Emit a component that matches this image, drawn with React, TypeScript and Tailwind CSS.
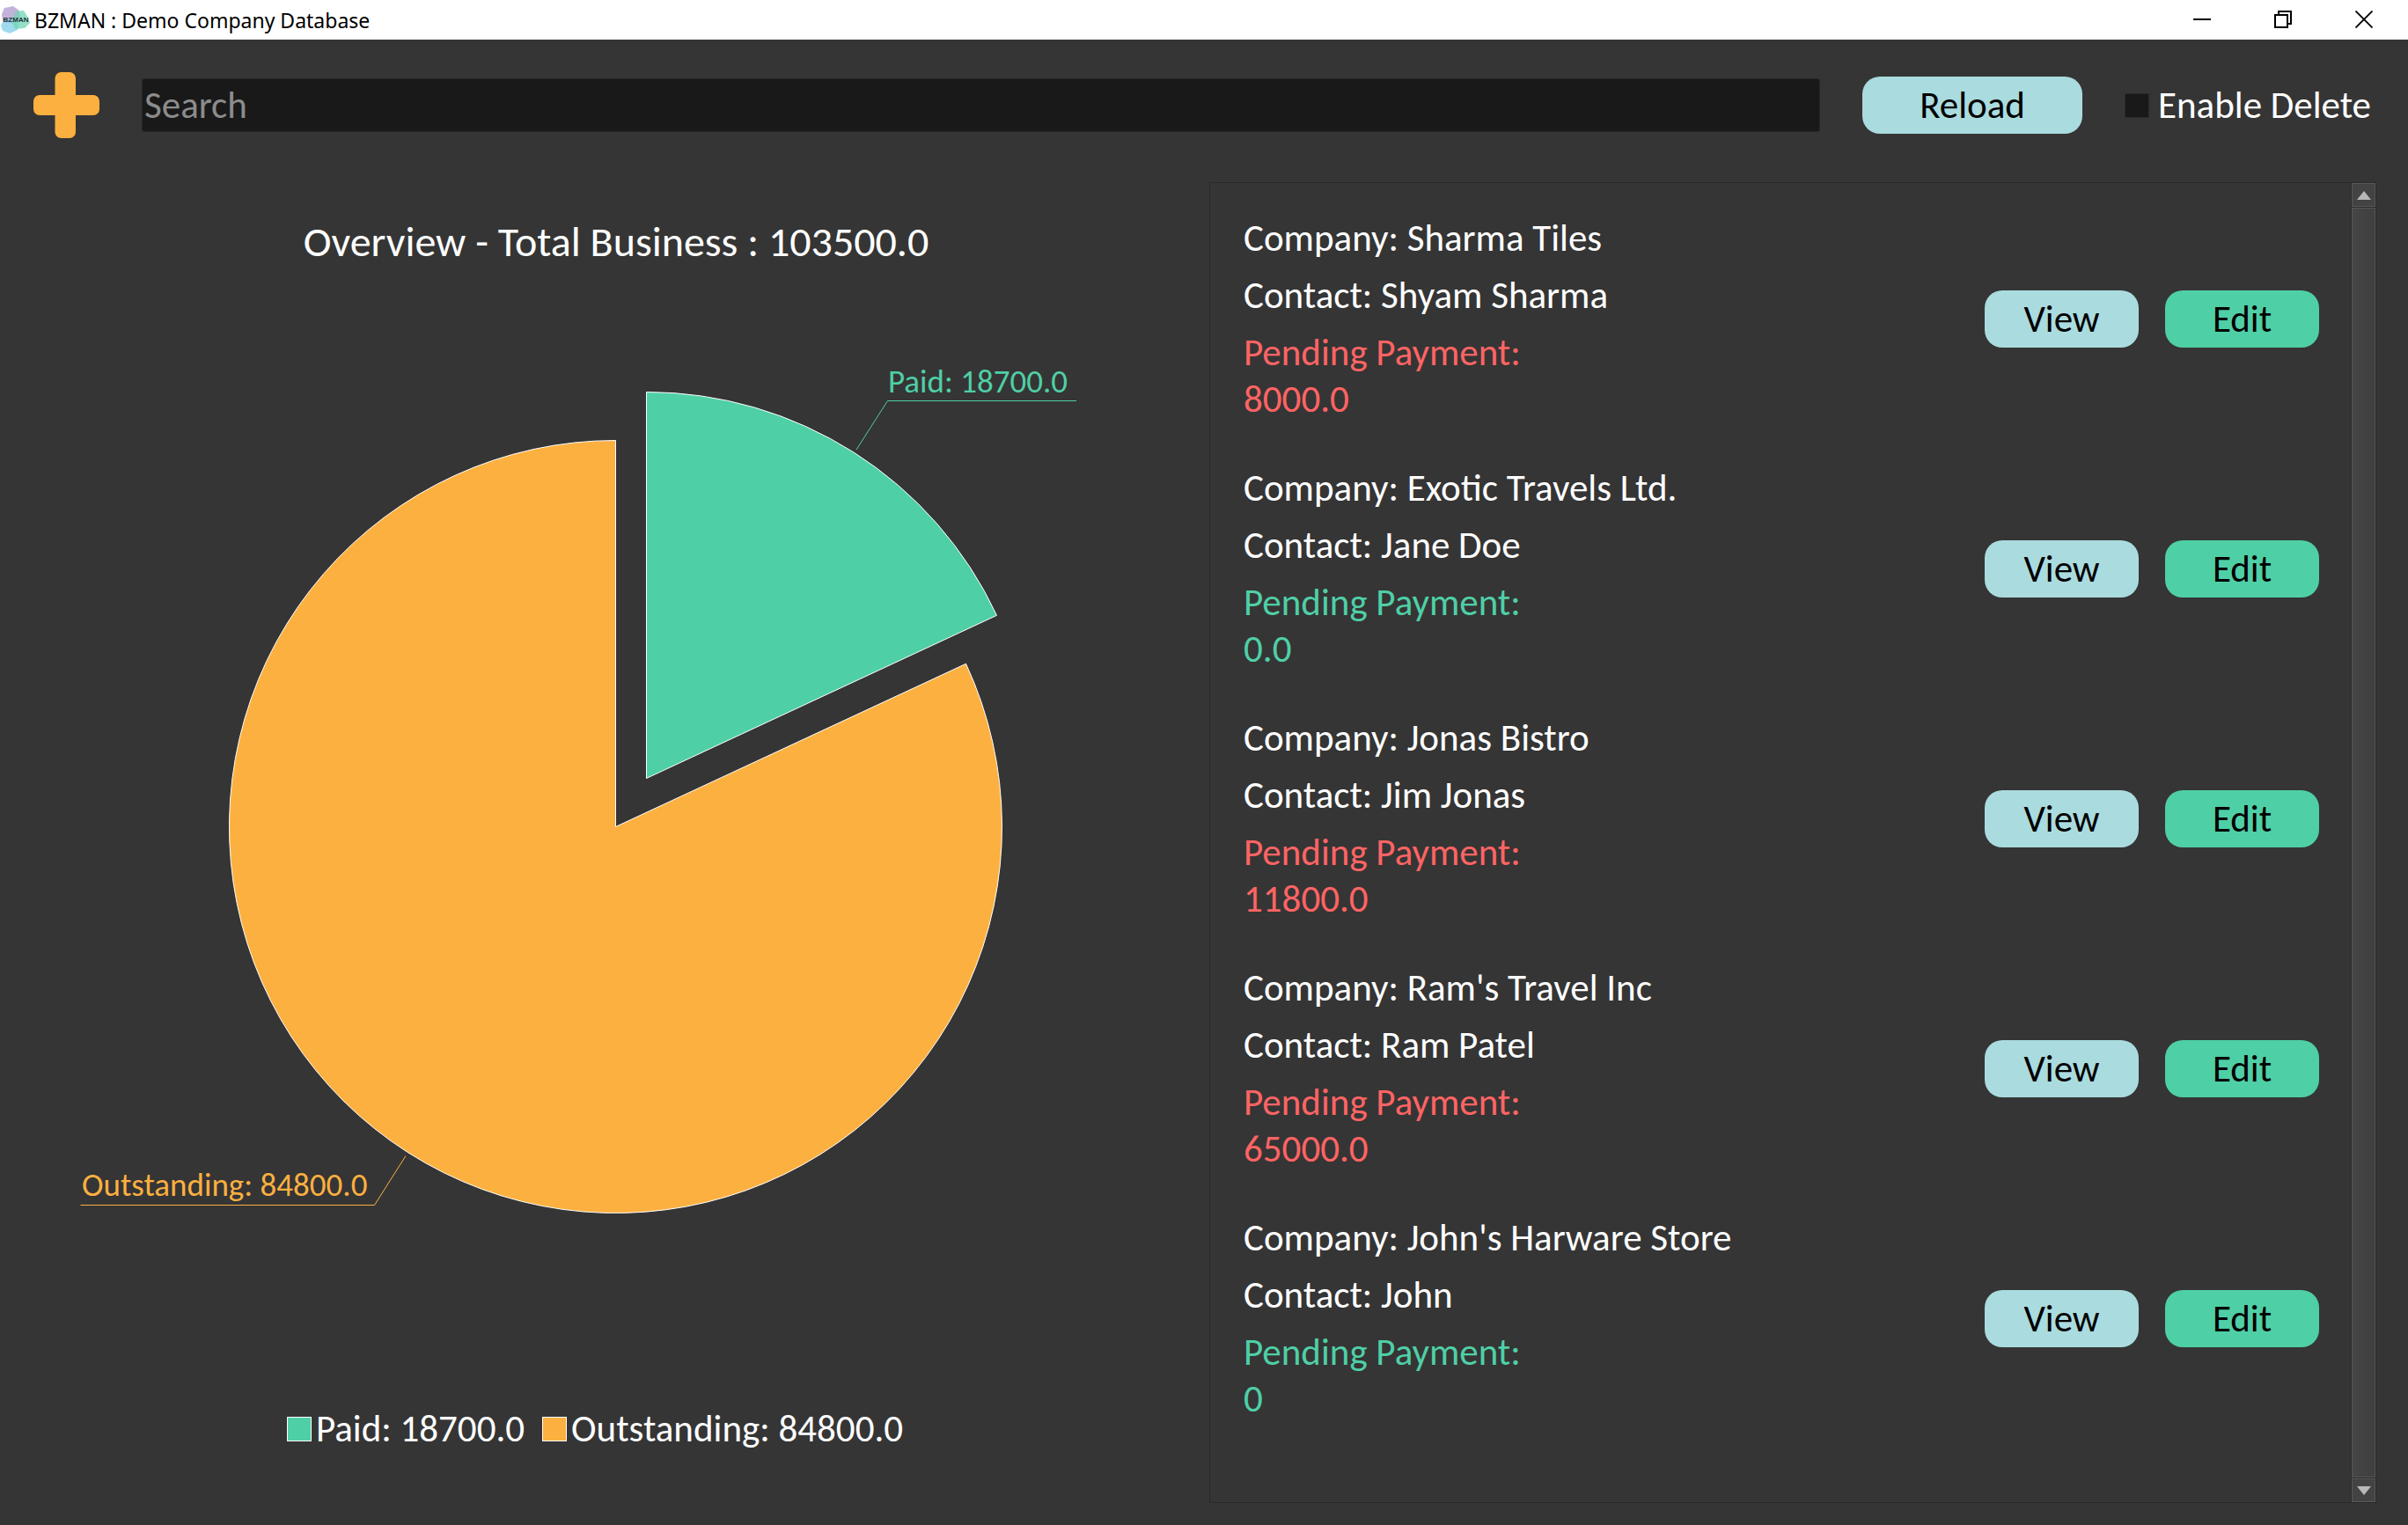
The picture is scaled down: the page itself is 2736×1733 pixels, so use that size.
import type { ReactNode } from "react";

type Company = { name: string; contact: string; pending: string; settled: boolean };

const companies: Company[] = [
  { name: "Sharma Tiles", contact: "Shyam Sharma", pending: "8000.0", settled: false },
  { name: "Exotic Travels Ltd.", contact: "Jane Doe", pending: "0.0", settled: true },
  { name: "Jonas Bistro", contact: "Jim Jonas", pending: "11800.0", settled: false },
  { name: "Ram's Travel Inc", contact: "Ram Patel", pending: "65000.0", settled: false },
  { name: "John's Harware Store", contact: "John", pending: "0", settled: true },
];

function Logo() {
  return (
    <svg viewBox="0 0 34 34" className="size-[34px]" aria-hidden="true">
      <path d="M5 3 L15 1 L22 6 L23 16 L14 21 L3 18 L2 10 Z" fill="#b9a6d3" fillOpacity="0.85" />
      <path d="M4 17 L12 15 L21 20 L20 28 L11 32 L3 29 L1 23 Z" fill="#8fd3ec" fillOpacity="0.85" />
      <path d="M18 7 L27 6 L32 14 L34 20 L28 26 L17 27 L13 18 Z" fill="#6fd6b3" fillOpacity="0.75" />
      <text x="18" y="19" textAnchor="middle" fontSize="8" fontWeight="700" fill="#26323a" className="font-['Liberation_Sans',sans-serif]">
        BZMAN
      </text>
    </svg>
  );
}

function WindowButton({ label, children }: { label: string; children: ReactNode }) {
  return (
    <button type="button" aria-label={label} className="flex h-[43px] w-[92px] items-center justify-center">
      <svg viewBox="0 0 20 20" className="size-5" fill="none" stroke="#000" strokeWidth="2">
        {children}
      </svg>
    </button>
  );
}

function TitleBar() {
  return (
    <div className="flex h-[45px] items-start bg-white pr-1 text-black">
      <div className="flex h-[46px] flex-1 items-center gap-[5px] font-['Noto_Sans',sans-serif] text-[23px]">
        <Logo />
        <span>BZMAN : Demo Company Database</span>
      </div>
      <WindowButton label="Minimize">
        <path d="M0 10 H20" />
      </WindowButton>
      <WindowButton label="Restore">
        <path d="M1 5 H15 V19 H1 Z M5 5 V1 H19 V15 H15" />
      </WindowButton>
      <WindowButton label="Close">
        <path d="M0.500 0.500 L19.500 19.500 M19.500 0.500 L0.500 19.500" strokeWidth="1.800" />
      </WindowButton>
    </div>
  );
}

function Toolbar() {
  return (
    <header className="flex h-[149px] items-center gap-12 pr-[42px] pl-[38px]">
      <button type="button" aria-label="Add company" className="shrink-0">
        <svg viewBox="0 0 75 75" className="size-[75px]" fill="#fcb040">
          <rect x="24.500" y="0" width="23.500" height="75" rx="7" />
          <rect x="0" y="26" width="75" height="23" rx="7" />
        </svg>
      </button>
      <input
        type="text"
        aria-label="Search"
        placeholder="Search"
        className="h-[61px] min-w-0 flex-1 rounded-[3px] border border-[#272727] bg-[#191919] px-0.5 text-white placeholder:text-[#8c8c8c]"
      />
      <button type="button" className="h-[65px] w-[250px] rounded-[20px] bg-[#aadbdf] text-black">
        Reload
      </button>
      <label className="flex items-center gap-[10px] whitespace-nowrap">
        <input type="checkbox" className="size-7 appearance-none border border-[#2a2a2a] bg-[#191919] checked:bg-[#4fcfa6]" />
        Enable Delete
      </label>
    </header>
  );
}

function PieChart() {
  return (
    <svg viewBox="26 304 1348 1293" className="w-full" role="img" aria-label="Paid 18700.0, outstanding 84800.0">
      <path
        d="M734.500 884.500 V445.500 A439 439 0 0 1 1132.500 699.300 Z"
        fill="#4fcfa6"
        stroke="#fff"
      />
      <path
        d="M699.500 939.500 L1097.500 754.300 A439 439 0 1 1 699.500 500.500 Z"
        fill="#fcb040"
        stroke="#fff"
      />
      <path d="M973 511 L1008.500 455.500 H1223" fill="none" stroke="#4fcfa6" />
      <path d="M461 1313.500 L425.500 1369.500 H91.500" fill="none" stroke="#fcb040" />
      <text x="1009" y="446" fontSize="37" fill="#4fcfa6">
        Paid: 18700.0
      </text>
      <text x="93" y="1359" fontSize="37" fill="#fcb040">
        Outstanding: 84800.0
      </text>
    </svg>
  );
}

function Overview() {
  return (
    <section className="flex flex-col pt-[38px]">
      <h1 className="text-center text-[48px] leading-[59px]">Overview - Total Business : 103500.0</h1>
      <PieChart />
      <ul className="flex items-center justify-center gap-5 pr-12">
        <li className="flex items-center gap-[5px]">
          <span className="size-7 border border-white bg-[#4fcfa6]" />
          Paid: 18700.0
        </li>
        <li className="flex items-center gap-[5px]">
          <span className="size-7 border border-white bg-[#fcb040]" />
          Outstanding: 84800.0
        </li>
      </ul>
    </section>
  );
}

function CompanyRow({ company }: { company: Company }) {
  return (
    <li className="flex items-center gap-[30px]">
      <div className="flex flex-1 flex-col gap-3">
        <p>Company: {company.name}</p>
        <p>Contact: {company.contact}</p>
        <p className={company.settled ? "text-[#4fcfa6]" : "text-[#ff6464]"}>
          Pending Payment:
          <br />
          {company.pending}
        </p>
      </div>
      <button type="button" className="h-[65px] w-[175px] rounded-[20px] bg-[#aadbdf] text-black">
        View
      </button>
      <button type="button" className="h-[65px] w-[175px] rounded-[20px] bg-[#4fcfa6] text-black">
        Edit
      </button>
    </li>
  );
}

function ScrollBar() {
  return (
    <div className="flex w-7 flex-col gap-px border-l border-[#2a2a2a] bg-[#2a2a2a]">
      <button type="button" aria-label="Scroll up" className="flex h-[27px] items-center justify-center border border-[#585858] bg-[#434343]">
        <svg viewBox="0 0 16 10" className="h-[10px] w-4" fill="#b8b8b8">
          <path d="M8 0 L16 10 H0 Z" />
        </svg>
      </button>
      <div className="flex-1 border border-[#585858] bg-linear-to-r from-[#464646] to-[#3f3f3f]" />
      <button type="button" aria-label="Scroll down" className="flex h-[27px] items-center justify-center border border-[#585858] bg-[#434343]">
        <svg viewBox="0 0 16 10" className="h-[10px] w-4" fill="#b8b8b8">
          <path d="M0 0 H16 L8 10 Z" />
        </svg>
      </button>
    </div>
  );
}

export default function App() {
  return (
    <div className="flex min-h-screen flex-col bg-[#353535] font-['Carlito','Lato',sans-serif] text-[43px] leading-[53px] text-white">
      <TitleBar />
      <Toolbar />
      <main className="grid flex-1 grid-cols-[1348fr_1326fr] pt-[13px] pr-9 pb-[25px] pl-[26px]">
        <Overview />
        <section className="flex border border-[#2a2a2a]">
          <ul className="flex flex-1 flex-col gap-12 py-9 pr-9 pl-[38px]">
            {companies.map((company) => (
              <CompanyRow key={company.name} company={company} />
            ))}
          </ul>
          <ScrollBar />
        </section>
      </main>
    </div>
  );
}
